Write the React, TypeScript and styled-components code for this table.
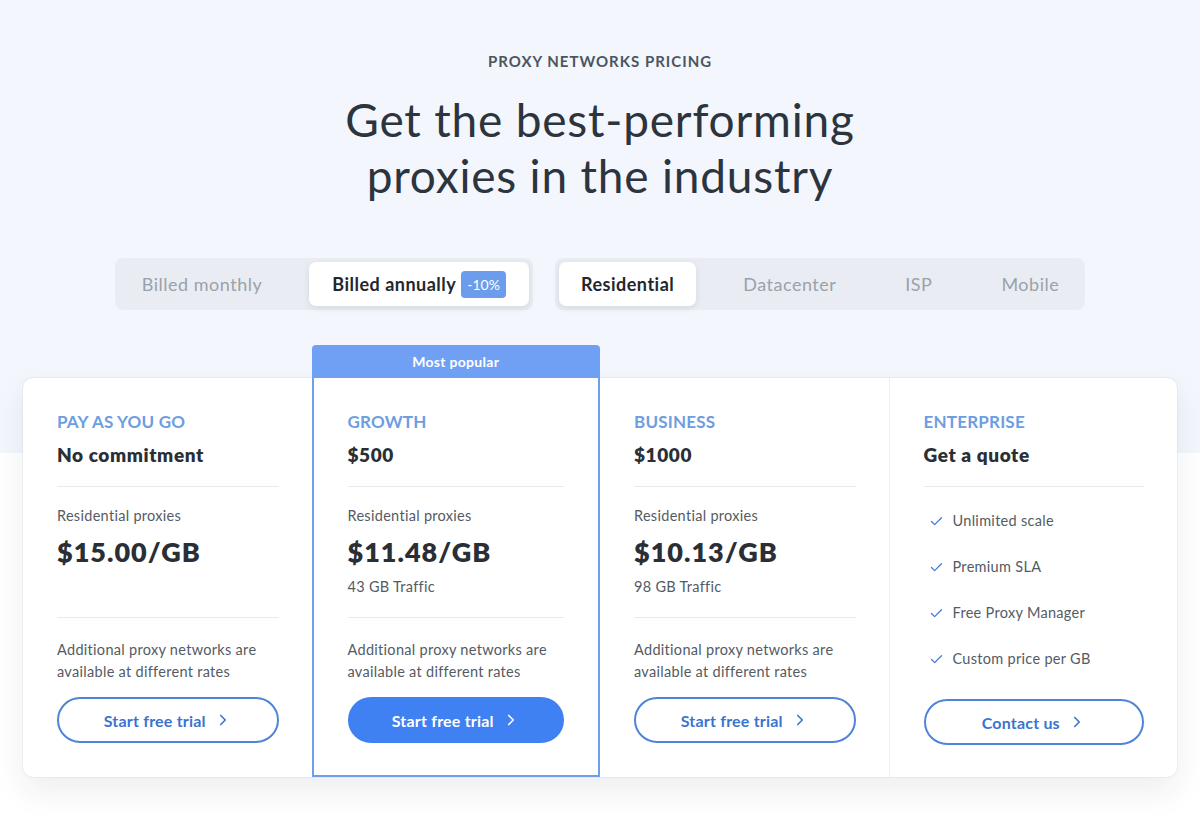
import React from "react";
import styled, { createGlobalStyle } from "styled-components";
import { ChevronRight, Check } from "lucide-react";

const Global = createGlobalStyle`
  html, body { margin: 0; padding: 0; }
  body {
    font-family: Lato, "Noto Sans", Arial, sans-serif;
    background: #ffffff;
    -webkit-font-smoothing: antialiased;
  }
`;

const Page = styled.div`
  width: 1200px;
  min-height: 835px;
  box-sizing: border-box;
  padding: 51px 23px 40px;
  background: linear-gradient(to bottom, #f3f6fc 0, #f3f6fc 453px, #ffffff 453px);
  display: flex;
  flex-direction: column;
  align-items: center;
`;

const Eyebrow = styled.div`
  font-size: 15px;
  line-height: 20px;
  font-weight: 700;
  letter-spacing: 1px;
  color: #4b5560;
  text-transform: uppercase;
`;

const Heading = styled.h1`
  margin: 21px 0 0;
  font-size: 46px;
  line-height: 56px;
  font-weight: 400;
  color: #2c343d;
  text-align: center;
  letter-spacing: 0.8px;
`;

const ToggleRow = styled.div`
  margin-top: 54px;
  display: flex;
  gap: 22px;
`;

const Segmented = styled.div<{ $gap: number }>`
  display: flex;
  align-items: center;
  gap: ${(p) => p.$gap}px;
  padding: 4px;
  height: 52px;
  box-sizing: border-box;
  background: #e9edf3;
  border-radius: 8px;
`;

const Segment = styled.div<{ $active?: boolean; $pad?: number }>`
  height: 44px;
  display: flex;
  align-items: center;
  gap: 5px;
  padding: 0 ${(p) => (p.$pad ? p.$pad : 22)}px;
  border-radius: 7px;
  font-size: 18px;
  letter-spacing: 0.5px;
  font-weight: ${(p) => (p.$active ? 700 : 400)};
  color: ${(p) => (p.$active ? "#23272d" : "#9ba1a9")};
  background: ${(p) => (p.$active ? "#ffffff" : "transparent")};
  box-shadow: ${(p) => (p.$active ? "0 2px 6px rgba(30, 40, 60, 0.10)" : "none")};
`;

const Badge = styled.span`
  display: inline-flex;
  align-items: center;
  height: 27px;
  padding: 0 6px;
  border-radius: 4px;
  background: #6c9cec;
  color: #ffffff;
  font-size: 14px;
  font-weight: 400;
  letter-spacing: 0;
`;

const Board = styled.div`
  margin-top: 68px;
  width: 100%;
  display: grid;
  grid-template-columns: repeat(4, 1fr);
  background: #ffffff;
  border-radius: 10px;
  box-shadow: 0 0 0 1px rgba(20, 30, 50, 0.04), 0 14px 32px rgba(30, 40, 60, 0.08);
`;

const Column = styled.div<{ $divider?: boolean }>`
  display: flex;
  flex-direction: column;
  padding: 33px 33px 32px 34px;
  border-left: ${(p) => (p.$divider ? "1px solid #eceef1" : "none")};
`;

const PopularColumn = styled.div`
  margin-top: -33px;
  display: flex;
  flex-direction: column;
`;

const PopularHeader = styled.div`
  height: 33px;
  background: #6fa0f4;
  border-radius: 4px 4px 0 0;
  color: #ffffff;
  font-size: 14px;
  font-weight: 700;
  letter-spacing: 0.3px;
  display: flex;
  align-items: center;
  justify-content: center;
`;

const PopularBody = styled.div`
  flex: 1;
  display: flex;
  flex-direction: column;
  border: 2px solid #6d9ff1;
  border-top: none;
  padding: 33px 34px 32px 34px;
`;

const Head = styled.div`
  display: flex;
  flex-direction: column;
  gap: 10px;
  padding-bottom: 19px;
  border-bottom: 1px solid #e7e9ec;
`;

const PlanName = styled.div`
  font-size: 17px;
  line-height: 22px;
  font-weight: 700;
  color: #6d9de2;
  letter-spacing: 0.2px;
  text-transform: uppercase;
`;

const Sub = styled.div`
  font-size: 19px;
  line-height: 24px;
  font-weight: 800;
  letter-spacing: 0.6px;
  color: #2a2f36;
`;

const PriceBlock = styled.div`
  height: 131px;
  box-sizing: border-box;
  padding-top: 19px;
  border-bottom: 1px solid #e7e9ec;
  display: flex;
  flex-direction: column;
`;

const Small = styled.div`
  font-size: 14.5px;
  line-height: 20px;
  letter-spacing: 0.3px;
  color: #545b64;
`;

const Price = styled.div`
  margin: 10px 0 9px;
  font-size: 27px;
  line-height: 32px;
  font-weight: 800;
  color: #2a2f36;
  letter-spacing: 1px;
`;

const Note = styled.div`
  margin-top: 21px;
  font-size: 14.5px;
  line-height: 22px;
  letter-spacing: 0.3px;
  color: #545b64;
`;

const List = styled.ul`
  list-style: none;
  margin: 24px 0 0;
  padding: 0 0 0 5px;
  display: flex;
  flex-direction: column;
  gap: 26px;
`;

const Item = styled.li`
  display: flex;
  align-items: center;
  gap: 9px;
  font-size: 14.5px;
  line-height: 20px;
  letter-spacing: 0.3px;
  color: #545b64;
`;

const Button = styled.button<{ $filled?: boolean; $gapTop?: number }>`
  margin-top: ${(p) => (p.$gapTop !== undefined ? `${p.$gapTop}px` : "auto")};
  height: 46px;
  width: 100%;
  border-radius: 23px;
  box-sizing: border-box;
  border: 2px solid ${(p) => (p.$filled ? "#3f80f2" : "#4f84d8")};
  background: ${(p) => (p.$filled ? "#3f80f2" : "#ffffff")};
  color: ${(p) => (p.$filled ? "#ffffff" : "#3b74d0")};
  font-family: inherit;
  font-size: 16px;
  font-weight: 700;
  letter-spacing: 0.2px;
  display: flex;
  align-items: center;
  justify-content: center;
  gap: 8px;
  cursor: pointer;
`;

type PlanData = {
  name: string;
  sub: string;
  price: string;
  traffic?: string;
};

const plans: PlanData[] = [
  { name: "Pay as you go", sub: "No commitment", price: "$15.00/GB" },
  { name: "Growth", sub: "$500", price: "$11.48/GB", traffic: "43 GB Traffic" },
  { name: "Business", sub: "$1000", price: "$10.13/GB", traffic: "98 GB Traffic" },
];

function PlanContent({ plan, filled }: { plan: PlanData; filled?: boolean }) {
  return (
    <>
      <Head>
        <PlanName>{plan.name}</PlanName>
        <Sub>{plan.sub}</Sub>
      </Head>
      <PriceBlock>
        <Small>Residential proxies</Small>
        <Price>{plan.price}</Price>
        {plan.traffic && <Small>{plan.traffic}</Small>}
      </PriceBlock>
      <Note>
        Additional proxy networks are
        <br />
        available at different rates
      </Note>
      <Button $filled={filled} $gapTop={14}>
        Start free trial <ChevronRight size={18} strokeWidth={2.2} />
      </Button>
    </>
  );
}

export default function App() {
  return (
    <>
      <Global />
      <Page>
        <Eyebrow>Proxy networks pricing</Eyebrow>
        <Heading>
          Get the best-performing
          <br />
          proxies in the industry
        </Heading>
        <ToggleRow>
          <Segmented $gap={24}>
            <Segment $pad={23}>Billed monthly</Segment>
            <Segment $active $pad={23}>
              Billed annually <Badge>-10%</Badge>
            </Segment>
          </Segmented>
          <Segmented $gap={25}>
            <Segment $active>Residential</Segment>
            <Segment>Datacenter</Segment>
            <Segment>ISP</Segment>
            <Segment>Mobile</Segment>
          </Segmented>
        </ToggleRow>
        <Board>
          <Column>
            <PlanContent plan={plans[0]} />
          </Column>
          <PopularColumn>
            <PopularHeader>Most popular</PopularHeader>
            <PopularBody>
              <PlanContent plan={plans[1]} filled />
            </PopularBody>
          </PopularColumn>
          <Column>
            <PlanContent plan={plans[2]} />
          </Column>
          <Column $divider>
            <Head>
              <PlanName>Enterprise</PlanName>
              <Sub>Get a quote</Sub>
            </Head>
            <List>
              {["Unlimited scale", "Premium SLA", "Free Proxy Manager", "Custom price per GB"].map((t) => (
                <Item key={t}>
                  <Check size={15} strokeWidth={2.2} color="#4a7fd4" />
                  {t}
                </Item>
              ))}
            </List>
            <Button>
              Contact us <ChevronRight size={18} strokeWidth={2.2} />
            </Button>
          </Column>
        </Board>
      </Page>
    </>
  );
}
